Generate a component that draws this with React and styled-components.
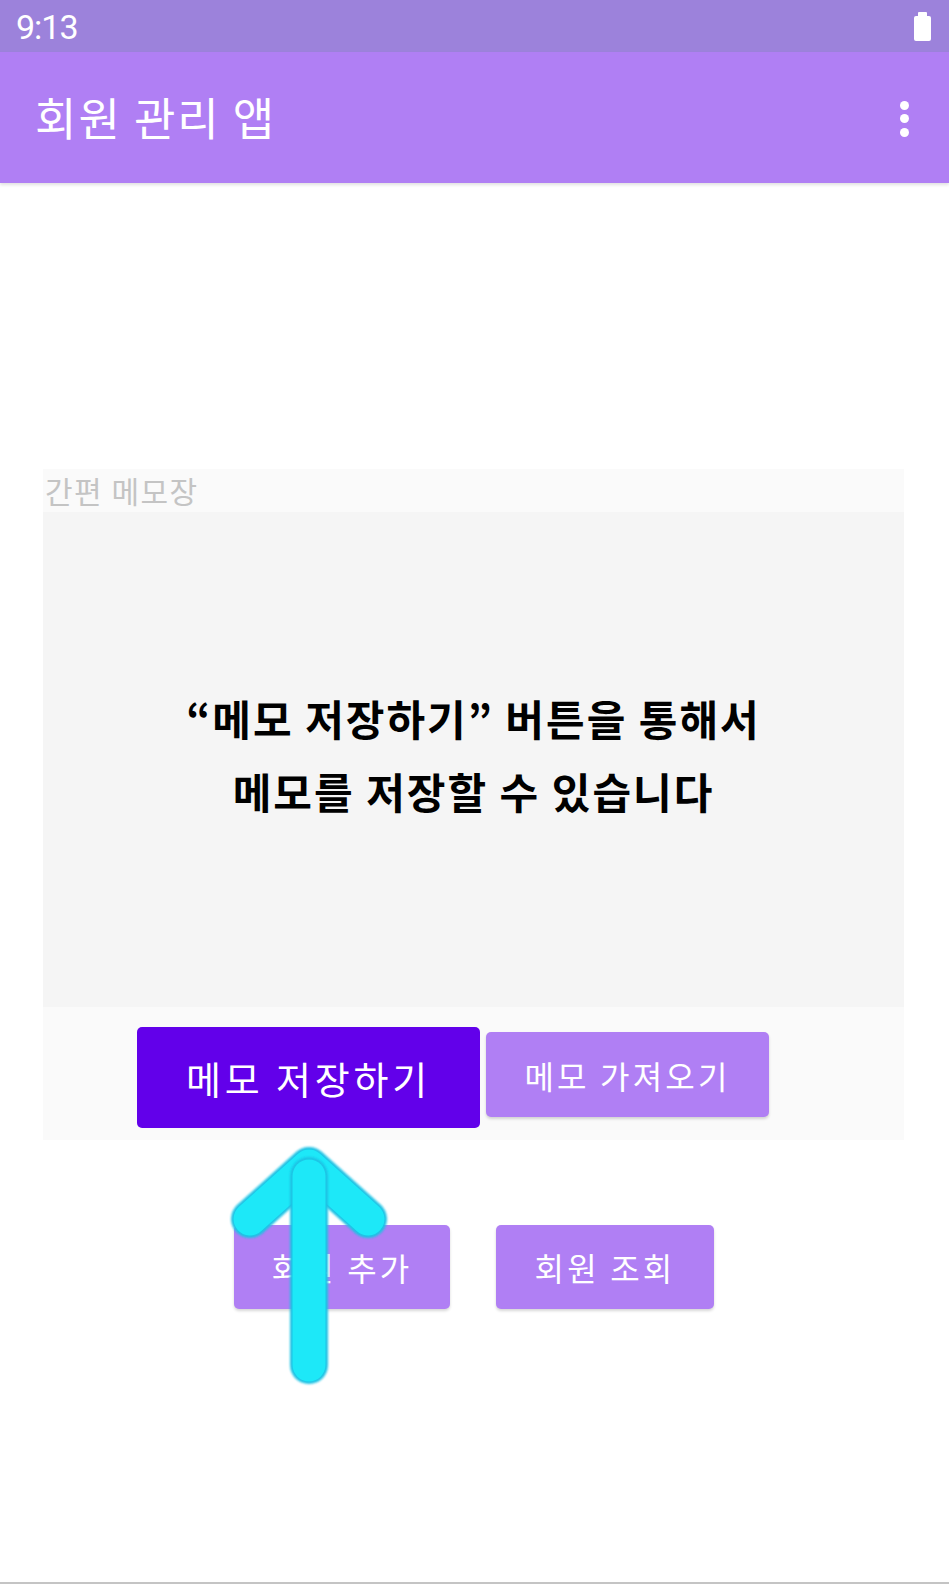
import React from "react";
import styled, { createGlobalStyle } from "styled-components";

const GlobalStyle = createGlobalStyle`
  html, body { margin: 0; padding: 0; background: #ffffff; }
  body { font-family: "Noto Sans CJK KR", "Noto Sans", Roboto, sans-serif; }
  * { box-sizing: border-box; }
`;

const Screen = styled.div`
  position: relative;
  width: 949px;
  height: 1584px;
  display: flex;
  flex-direction: column;
  background: #ffffff;
  border-bottom: 2px solid #c4c4c4;
  overflow: hidden;
`;

const StatusBar = styled.div`
  height: 52px;
  flex: none;
  background: #9c82db;
  display: flex;
  align-items: center;
  justify-content: space-between;
  padding: 0 18px 0 16px;
`;

const Time = styled.span`
  font-family: Roboto, "Liberation Sans", sans-serif;
  font-size: 34px;
  letter-spacing: -1px;
  color: #ffffff;
  line-height: 1;
  margin-top: 2px;
`;

const Battery = styled.div`
  position: relative;
  width: 17px;
  height: 25px;
  margin-top: 4px;
  background: #ffffff;
  border-radius: 2px;
  &::before {
    content: "";
    position: absolute;
    left: 4px;
    top: -4px;
    width: 9px;
    height: 5px;
    background: #ffffff;
    border-radius: 1px 1px 0 0;
  }
`;

const AppBar = styled.div`
  height: 131px;
  flex: none;
  background: #b07ff4;
  display: flex;
  align-items: center;
  justify-content: space-between;
  padding: 0 40px 0 35px;
  box-shadow: 0 2px 3px rgba(0, 0, 0, 0.12);
  position: relative;
  z-index: 1;
`;

const Title = styled.h1`
  margin: 0;
  font-weight: 400;
  font-size: 45px;
  color: #ffffff;
  letter-spacing: 2px;
  line-height: 1;
  margin-top: -2px;
`;

const MenuDots = styled.div`
  display: flex;
  flex-direction: column;
  gap: 4.5px;
  margin-top: 2px;
`;

const Dot = styled.span`
  width: 9px;
  height: 9px;
  border-radius: 50%;
  background: #ffffff;
`;

const Content = styled.main`
  flex: 1;
  padding: 286px 45px 0 43px;
  display: flex;
  flex-direction: column;
`;

const MemoCard = styled.section`
  background: #fafafa;
  display: flex;
  flex-direction: column;
`;

const MemoLabel = styled.div`
  height: 43px;
  padding-left: 2px;
  font-size: 30px;
  line-height: 43px;
  color: #c4c4c4;
  letter-spacing: 1.5px;
`;

const MemoArea = styled.div`
  height: 495px;
  background: #f5f5f5;
  display: flex;
  align-items: center;
  justify-content: center;
  text-align: center;
`;

const MemoHint = styled.p`
  margin: 0;
  font-weight: 700;
  font-size: 42px;
  line-height: 73px;
  color: #000000;
  letter-spacing: 2px;
  margin-top: -12px;
`;

const ButtonRow = styled.div`
  height: 133px;
  display: flex;
  align-items: flex-start;
  gap: 6px;
  padding-left: 94px;
`;

const Button = styled.button`
  border: none;
  border-radius: 5px;
  color: #ffffff;
  font-family: "Noto Sans CJK KR", "Noto Sans", sans-serif;
  font-weight: 400;
  letter-spacing: 0.1em;
  display: flex;
  align-items: center;
  justify-content: center;
  padding: 0;
  box-shadow: ${(p) => (p.$primary ? "none" : "0 2px 3px rgba(0, 0, 0, 0.16)")};
  width: ${(p) => p.$w}px;
  height: ${(p) => p.$h}px;
  margin-top: ${(p) => p.$top || 0}px;
  font-size: ${(p) => p.$fs}px;
  background: ${(p) => (p.$primary ? "#6200ea" : "#b07ff4")};
`;

const MemberRow = styled.div`
  display: flex;
  gap: 46px;
  margin-top: 85px;
  padding-left: 191px;
`;

const ArrowOverlay = styled.svg`
  position: absolute;
  left: 220px;
  top: 1140px;
  width: 180px;
  height: 250px;
  overflow: visible;
  z-index: 5;
`;

function UpArrow() {
  const d1 = "M89 225 L89 36";
  const d2 = "M30 79 L89 26 L148 79";
  return (
    <ArrowOverlay viewBox="0 0 180 250">
      <defs>
        <filter
          id="soft"
          filterUnits="userSpaceOnUse"
          x="-10"
          y="-10"
          width="200"
          height="270"
        >
          <feGaussianBlur stdDeviation="1.2" />
        </filter>
      </defs>
      <g fill="none" strokeLinecap="round" strokeLinejoin="round">
        <path d={d2} stroke="#1cc2e4" strokeWidth="38" filter="url(#soft)" />
        <path d={d2} stroke="#1de8f8" strokeWidth="33" />
        <path d={d1} stroke="#1cc2e4" strokeWidth="38" filter="url(#soft)" />
        <path d={d1} stroke="#1de8f8" strokeWidth="33" />
      </g>
    </ArrowOverlay>
  );
}

export default function App() {
  return (
    <>
      <GlobalStyle />
      <Screen>
        <StatusBar>
          <Time>9:13</Time>
          <Battery />
        </StatusBar>
        <AppBar>
          <Title>회원 관리 앱</Title>
          <MenuDots>
            <Dot />
            <Dot />
            <Dot />
          </MenuDots>
        </AppBar>
        <Content>
          <MemoCard>
            <MemoLabel>간편 메모장</MemoLabel>
            <MemoArea>
              <MemoHint>
                “메모 저장하기” 버튼을 통해서
                <br />
                메모를 저장할 수 있습니다
              </MemoHint>
            </MemoArea>
            <ButtonRow>
              <Button $primary $w={343} $h={101} $top={20} $fs={38}>
                메모 저장하기
              </Button>
              <Button $w={283} $h={85} $top={25} $fs={32}>
                메모 가져오기
              </Button>
            </ButtonRow>
          </MemoCard>
          <MemberRow>
            <Button $w={216} $h={84} $fs={32}>
              회원 추가
            </Button>
            <Button $w={218} $h={84} $fs={32}>
              회원 조회
            </Button>
          </MemberRow>
        </Content>
        <UpArrow />
      </Screen>
    </>
  );
}
